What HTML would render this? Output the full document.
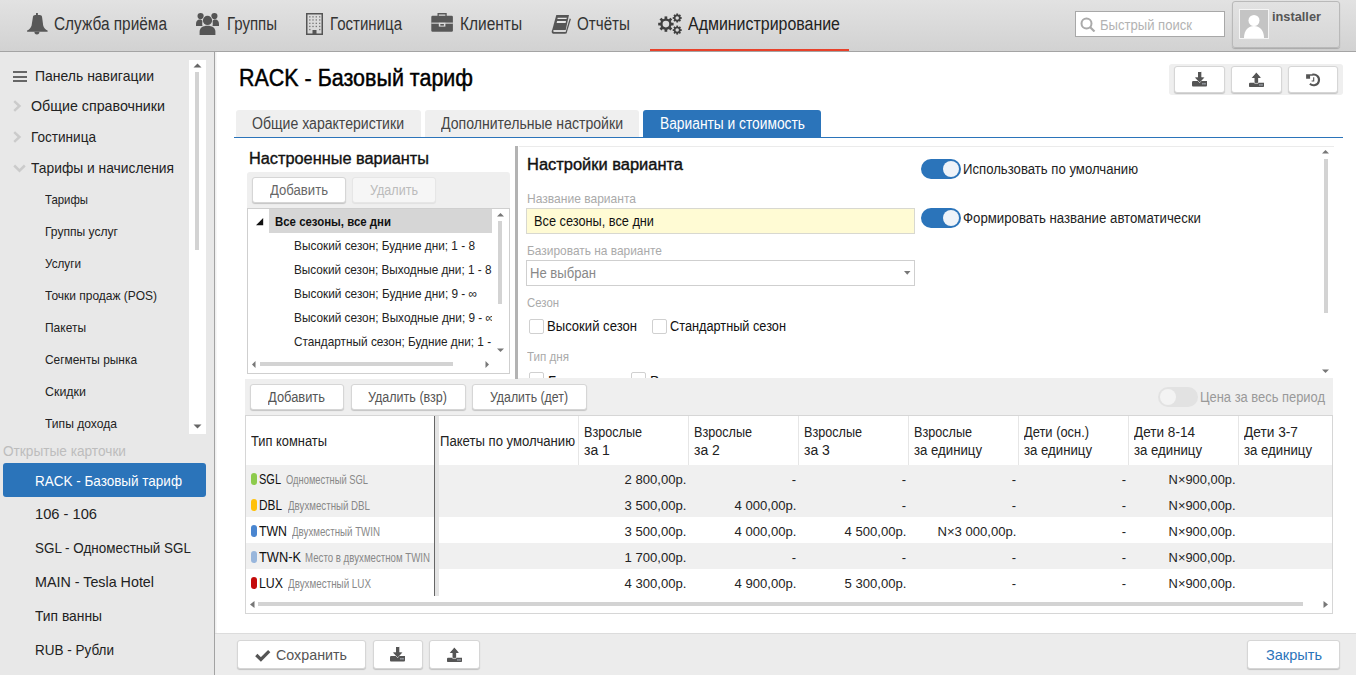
<!DOCTYPE html>
<html><head><meta charset="utf-8"><style>
html,body{margin:0;padding:0;width:1356px;height:675px;overflow:hidden;background:#fff;font-family:"Liberation Sans", sans-serif;}

.btn{position:absolute;box-sizing:border-box;background:#fff;border:1px solid #d6d6d6;border-radius:3px;box-shadow:0 1px 1px rgba(0,0,0,.18);}

</style></head><body>
<div style="position:absolute;left:0px;top:0px;width:1356px;height:51px;background:linear-gradient(#e2e2e2,#d2d2d2);"></div><div style="position:absolute;left:0px;top:51px;width:1356px;height:1px;background:#a4a4a4;"></div><div style="position:absolute;left:650px;top:49px;width:199px;height:2px;background:#e8412a;"></div><svg style="position:absolute;left:24px;top:10px" width="28" height="28" viewBox="0 0 28 28">
<path fill="#585858" d="M8.9 7.2C8.9 5.6 10 4.9 11.3 4.9H15.6C17 4.9 18.1 5.6 18.1 7.2L19.2 15.5C19.6 17.8 21.5 19.5 23.6 20.6V21.8H3.1V20.6C5.2 19.5 7.1 17.8 7.6 15.5Z"/>
<path fill="#585858" d="M12 3.1H13.9V5.2H12Z"/><path fill="#585858" d="M10.4 21.8H15.4A2.5 2.7 0 0 1 10.4 21.8Z"/></svg><div id="t4" style="position:absolute;left:54px;top:12.76px;font-size:18px;line-height:22px;color:#333;font-weight:400;white-space:nowrap;transform:scaleX(0.8556);transform-origin:left top;">Служба приёма</div><svg style="position:absolute;left:196px;top:13px" width="23" height="22" viewBox="0 0 23 22">
<g fill="#555"><circle cx="4.6" cy="3.1" r="3.1"/><circle cx="18.4" cy="3.1" r="3.1"/>
<path d="M0 11c0-3 1.5-4.6 3.6-4.6 1.4 0 2.6.6 3.4 1.8-.5.8-.8 1.8-.8 2.9 0 .7.1 1.3.3 1.9H0z"/>
<path d="M23 11c0-3-1.5-4.6-3.6-4.6-1.4 0-2.6.6-3.4 1.8.5.8.8 1.8.8 2.9 0 .7-.1 1.3-.3 1.9H23z"/>
</g><circle cx="11.5" cy="7.4" r="5.3" fill="#dbdbdb"/><circle cx="11.5" cy="7.4" r="4.6" fill="#555"/>
<path d="M2.8 22v-3.5c0-4.5 3.6-6.6 8.7-6.6s8.7 2.1 8.7 6.6V22z" fill="#d9d9d9"/>
<path d="M3.6 22v-3.3c0-4 3.3-6 7.9-6s7.9 2 7.9 6V22z" fill="#555"/></svg><div id="t6" style="position:absolute;left:227px;top:12.76px;font-size:18px;line-height:22px;color:#333;font-weight:400;white-space:nowrap;transform:scaleX(0.8336);transform-origin:left top;">Группы</div><svg style="position:absolute;left:306px;top:13px" width="17" height="22" viewBox="0 0 17 22">
<rect x="0.75" y="0.75" width="15.5" height="20.5" fill="none" stroke="#555" stroke-width="1.5"/>
<g fill="#7a7a7a"><rect x="3.1" y="3.2" width="1.4" height="1.3"/><rect x="6.3" y="3.2" width="1.4" height="1.3"/><rect x="9.6" y="3.2" width="1.4" height="1.3"/><rect x="13.0" y="3.2" width="1.4" height="1.3"/><rect x="3.1" y="6.3" width="1.4" height="1.3"/><rect x="6.3" y="6.3" width="1.4" height="1.3"/><rect x="9.6" y="6.3" width="1.4" height="1.3"/><rect x="13.0" y="6.3" width="1.4" height="1.3"/><rect x="3.1" y="9.7" width="1.4" height="1.3"/><rect x="6.3" y="9.7" width="1.4" height="1.3"/><rect x="9.6" y="9.7" width="1.4" height="1.3"/><rect x="13.0" y="9.7" width="1.4" height="1.3"/><rect x="3.1" y="12.8" width="1.4" height="1.3"/><rect x="6.3" y="12.8" width="1.4" height="1.3"/><rect x="9.6" y="12.8" width="1.4" height="1.3"/><rect x="13.0" y="12.8" width="1.4" height="1.3"/><rect x="3.1" y="15.9" width="1.4" height="1.3"/><rect x="13.0" y="15.9" width="1.4" height="1.3"/></g><rect x="6.5" y="17" width="4" height="4.5" fill="#555"/></svg><div id="t8" style="position:absolute;left:330px;top:12.76px;font-size:18px;line-height:22px;color:#333;font-weight:400;white-space:nowrap;transform:scaleX(0.8355);transform-origin:left top;">Гостиница</div><svg style="position:absolute;left:428px;top:10px" width="28" height="28" viewBox="0 0 28 28">
<path fill="#585858" d="M9.5 2.9H18.7V5.9H17.4V4.5H10.8V5.9H9.5Z"/>
<rect x="3.3" y="5.8" width="21.6" height="16" rx="1.2" fill="#585858"/>
<rect x="3.3" y="12.6" width="21.6" height="1.1" fill="#dcdcdc"/>
<rect x="10.8" y="12.8" width="6.6" height="3.8" fill="#dcdcdc"/><rect x="12.3" y="14" width="3.6" height="1.6" fill="#585858"/></svg><div id="t10" style="position:absolute;left:460px;top:12.76px;font-size:18px;line-height:22px;color:#333;font-weight:400;white-space:nowrap;transform:scaleX(0.8589);transform-origin:left top;">Клиенты</div><svg style="position:absolute;left:546px;top:10px" width="28" height="28" viewBox="0 0 28 28">
<path fill="#555" d="M10.3 4.9H23L19.7 20H6.2Z"/>
<path fill="#e6e6e6" d="M11.7 7.8H20.8L20.5 9H11.4Z"/><path fill="#e6e6e6" d="M11.1 11H20L19.6 12.9H10.6Z"/>
<path fill="#555" d="M6.2 19.9C5.2 21.2 5.6 23.8 8 23.8H19.6L20.1 21.9H8.2C7.2 21.9 6.9 20.7 7.6 19.9Z"/>
<path d="M24.3 8.8L19.9 23.4" stroke="#555" stroke-width="1.3" fill="none"/></svg><div id="t12" style="position:absolute;left:577px;top:12.76px;font-size:18px;line-height:22px;color:#333;font-weight:400;white-space:nowrap;transform:scaleX(0.8436);transform-origin:left top;">Отчёты</div><svg style="position:absolute;left:657px;top:13px" width="26" height="22" viewBox="0 0 26 22">
<circle cx="8.9" cy="11.1" r="4.5" fill="none" stroke="#404040" stroke-width="2.4"/><rect x="7.55" y="3.40" width="2.7" height="3.20" fill="#404040" transform="rotate(0.0 8.9 11.1)"/><rect x="7.55" y="3.40" width="2.7" height="3.20" fill="#404040" transform="rotate(45.0 8.9 11.1)"/><rect x="7.55" y="3.40" width="2.7" height="3.20" fill="#404040" transform="rotate(90.0 8.9 11.1)"/><rect x="7.55" y="3.40" width="2.7" height="3.20" fill="#404040" transform="rotate(135.0 8.9 11.1)"/><rect x="7.55" y="3.40" width="2.7" height="3.20" fill="#404040" transform="rotate(180.0 8.9 11.1)"/><rect x="7.55" y="3.40" width="2.7" height="3.20" fill="#404040" transform="rotate(225.0 8.9 11.1)"/><rect x="7.55" y="3.40" width="2.7" height="3.20" fill="#404040" transform="rotate(270.0 8.9 11.1)"/><rect x="7.55" y="3.40" width="2.7" height="3.20" fill="#404040" transform="rotate(315.0 8.9 11.1)"/><circle cx="20.2" cy="5" r="2.6" fill="none" stroke="#404040" stroke-width="1.7"/><rect x="19.30" y="0.50" width="1.8" height="1.90" fill="#404040" transform="rotate(0.0 20.2 5)"/><rect x="19.30" y="0.50" width="1.8" height="1.90" fill="#404040" transform="rotate(45.0 20.2 5)"/><rect x="19.30" y="0.50" width="1.8" height="1.90" fill="#404040" transform="rotate(90.0 20.2 5)"/><rect x="19.30" y="0.50" width="1.8" height="1.90" fill="#404040" transform="rotate(135.0 20.2 5)"/><rect x="19.30" y="0.50" width="1.8" height="1.90" fill="#404040" transform="rotate(180.0 20.2 5)"/><rect x="19.30" y="0.50" width="1.8" height="1.90" fill="#404040" transform="rotate(225.0 20.2 5)"/><rect x="19.30" y="0.50" width="1.8" height="1.90" fill="#404040" transform="rotate(270.0 20.2 5)"/><rect x="19.30" y="0.50" width="1.8" height="1.90" fill="#404040" transform="rotate(315.0 20.2 5)"/><circle cx="20.2" cy="17.1" r="2.6" fill="none" stroke="#404040" stroke-width="1.7"/><rect x="19.30" y="12.60" width="1.8" height="1.90" fill="#404040" transform="rotate(0.0 20.2 17.1)"/><rect x="19.30" y="12.60" width="1.8" height="1.90" fill="#404040" transform="rotate(45.0 20.2 17.1)"/><rect x="19.30" y="12.60" width="1.8" height="1.90" fill="#404040" transform="rotate(90.0 20.2 17.1)"/><rect x="19.30" y="12.60" width="1.8" height="1.90" fill="#404040" transform="rotate(135.0 20.2 17.1)"/><rect x="19.30" y="12.60" width="1.8" height="1.90" fill="#404040" transform="rotate(180.0 20.2 17.1)"/><rect x="19.30" y="12.60" width="1.8" height="1.90" fill="#404040" transform="rotate(225.0 20.2 17.1)"/><rect x="19.30" y="12.60" width="1.8" height="1.90" fill="#404040" transform="rotate(270.0 20.2 17.1)"/><rect x="19.30" y="12.60" width="1.8" height="1.90" fill="#404040" transform="rotate(315.0 20.2 17.1)"/></svg><div id="t14" style="position:absolute;left:688px;top:12.76px;font-size:18px;line-height:22px;color:#222;font-weight:400;white-space:nowrap;transform:scaleX(0.8855);transform-origin:left top;">Администрирование</div><div style="position:absolute;left:1075px;top:11px;width:150px;height:26px;box-sizing:border-box;background:#fff;border:1px solid #a8a8a8;"></div><svg style="position:absolute;left:1080px;top:17px" width="16" height="15" viewBox="0 0 16 15">
<circle cx="6.5" cy="6.5" r="5" fill="none" stroke="#aaa" stroke-width="2"/><path d="M10 10l4.5 4.5" stroke="#aaa" stroke-width="2.2"/></svg><div id="t17" style="position:absolute;left:1100px;top:16.65px;font-size:14px;line-height:17px;color:#b3b3b3;font-weight:400;white-space:nowrap;transform:scaleX(0.9336);transform-origin:left top;">Быстрый поиск</div><div style="position:absolute;left:1232px;top:1px;width:108px;height:47px;box-sizing:border-box;border:1px solid #b9b9b9;border-radius:3px;background:linear-gradient(#e2e2e2,#d6d6d6);box-shadow:0 1px 1px rgba(0,0,0,.2);"></div><div style="position:absolute;left:1239px;top:9px;width:30px;height:30px;box-sizing:border-box;border:1px solid #f4f4f4;background:#c4c4c4;overflow:hidden;"></div><svg style="position:absolute;left:1240px;top:10px" width="28" height="28" viewBox="0 0 28 28">
<circle cx="14" cy="10.5" r="5.5" fill="#fff"/><path d="M4 28c0-8 4.5-12 10-12s10 4 10 12z" fill="#fff"/></svg><div id="t21" style="position:absolute;left:1272px;top:8.50px;font-size:13px;line-height:16px;color:#555;font-weight:700;white-space:nowrap;transform:scaleX(0.9828);transform-origin:left top;">installer</div><div style="position:absolute;left:0px;top:52px;width:214px;height:623px;background:#e8e8e8;"></div><div style="position:absolute;left:214px;top:52px;width:1px;height:623px;background:#a2a2a2;"></div><div style="position:absolute;left:215px;top:52px;width:2px;height:623px;background:linear-gradient(90deg,#ececec,#fafafa);"></div><div style="position:absolute;left:189px;top:60px;width:17px;height:374px;background:#fff;"></div><svg style="position:absolute;left:193px;top:63px" width="9" height="5"><path d="M0.5 4.5L4.5 0.5 8.5 4.5z" fill="#666"/></svg><svg style="position:absolute;left:193px;top:424px" width="9" height="5"><path d="M0.5 0.5L4.5 4.5 8.5 0.5z" fill="#666"/></svg><div style="position:absolute;left:195px;top:72px;width:4px;height:178px;background:#d3d3d3;"></div><div style="position:absolute;left:13px;top:71px;width:14px;height:2px;background:#666;"></div><div style="position:absolute;left:13px;top:76px;width:14px;height:2px;background:#666;"></div><div style="position:absolute;left:13px;top:80px;width:14px;height:2px;background:#666;"></div><div id="t32" style="position:absolute;left:35px;top:66.80px;font-size:15px;line-height:18px;color:#222;font-weight:400;white-space:nowrap;transform:scaleX(0.9312);transform-origin:left top;">Панель навигации</div><svg style="position:absolute;left:13px;top:100px" width="9" height="12"><path d="M1.2 1.2l5.2 4.8-5.2 4.8" fill="none" stroke="#cbcbcb" stroke-width="2.5"/></svg><div id="t34" style="position:absolute;left:31px;top:96.80px;font-size:15px;line-height:18px;color:#222;font-weight:400;white-space:nowrap;transform:scaleX(0.9501);transform-origin:left top;">Общие справочники</div><svg style="position:absolute;left:13px;top:131px" width="9" height="12"><path d="M1.2 1.2l5.2 4.8-5.2 4.8" fill="none" stroke="#cbcbcb" stroke-width="2.5"/></svg><div id="t36" style="position:absolute;left:31px;top:127.80px;font-size:15px;line-height:18px;color:#222;font-weight:400;white-space:nowrap;transform:scaleX(0.9051);transform-origin:left top;">Гостиница</div><svg style="position:absolute;left:13px;top:164px" width="13" height="9"><path d="M1.2 1.5l5.3 5.2 5.3-5.2" fill="none" stroke="#cbcbcb" stroke-width="2.5"/></svg><div id="t38" style="position:absolute;left:31px;top:158.80px;font-size:15px;line-height:18px;color:#222;font-weight:400;white-space:nowrap;transform:scaleX(0.9210);transform-origin:left top;">Тарифы и начисления</div><div id="t39" style="position:absolute;left:45px;top:191.50px;font-size:13px;line-height:16px;color:#222;font-weight:400;white-space:nowrap;transform:scaleX(0.8753);transform-origin:left top;">Тарифы</div><div id="t40" style="position:absolute;left:45px;top:223.50px;font-size:13px;line-height:16px;color:#222;font-weight:400;white-space:nowrap;transform:scaleX(0.9286);transform-origin:left top;">Группы услуг</div><div id="t41" style="position:absolute;left:45px;top:255.50px;font-size:13px;line-height:16px;color:#222;font-weight:400;white-space:nowrap;transform:scaleX(0.9004);transform-origin:left top;">Услуги</div><div id="t42" style="position:absolute;left:45px;top:287.50px;font-size:13px;line-height:16px;color:#222;font-weight:400;white-space:nowrap;transform:scaleX(0.9206);transform-origin:left top;">Точки продаж (POS)</div><div id="t43" style="position:absolute;left:45px;top:319.50px;font-size:13px;line-height:16px;color:#222;font-weight:400;white-space:nowrap;transform:scaleX(0.9210);transform-origin:left top;">Пакеты</div><div id="t44" style="position:absolute;left:45px;top:351.50px;font-size:13px;line-height:16px;color:#222;font-weight:400;white-space:nowrap;transform:scaleX(0.9147);transform-origin:left top;">Сегменты рынка</div><div id="t45" style="position:absolute;left:45px;top:383.50px;font-size:13px;line-height:16px;color:#222;font-weight:400;white-space:nowrap;transform:scaleX(0.9563);transform-origin:left top;">Скидки</div><div id="t46" style="position:absolute;left:45px;top:415.50px;font-size:13px;line-height:16px;color:#222;font-weight:400;white-space:nowrap;transform:scaleX(0.9300);transform-origin:left top;">Типы дохода</div><div id="t47" style="position:absolute;left:3px;top:442.65px;font-size:14px;line-height:17px;color:#bdbdbd;font-weight:400;white-space:nowrap;transform:scaleX(0.9753);transform-origin:left top;">Открытые карточки</div><div style="position:absolute;left:3px;top:463px;width:203px;height:34px;background:#2b74ba;border-radius:3px;"></div><div id="t49" style="position:absolute;left:35px;top:471.80px;font-size:15px;line-height:18px;color:#fff;font-weight:400;white-space:nowrap;transform:scaleX(0.8992);transform-origin:left top;">RACK - Базовый тариф</div><div id="t50" style="position:absolute;left:35px;top:504.80px;font-size:15px;line-height:18px;color:#222;font-weight:400;white-space:nowrap;transform:scaleX(0.9781);transform-origin:left top;">106 - 106</div><div id="t51" style="position:absolute;left:35px;top:538.80px;font-size:15px;line-height:18px;color:#222;font-weight:400;white-space:nowrap;transform:scaleX(0.8957);transform-origin:left top;">SGL - Одноместный SGL</div><div id="t52" style="position:absolute;left:35px;top:572.80px;font-size:15px;line-height:18px;color:#222;font-weight:400;white-space:nowrap;transform:scaleX(0.9538);transform-origin:left top;">MAIN - Tesla Hotel</div><div id="t53" style="position:absolute;left:35px;top:606.80px;font-size:15px;line-height:18px;color:#222;font-weight:400;white-space:nowrap;transform:scaleX(0.9220);transform-origin:left top;">Тип ванны</div><div id="t54" style="position:absolute;left:35px;top:640.80px;font-size:15px;line-height:18px;color:#222;font-weight:400;white-space:nowrap;transform:scaleX(0.9004);transform-origin:left top;">RUB - Рубли</div><div id="t55" style="position:absolute;left:239px;top:64.03px;font-size:23px;line-height:28px;color:#000;font-weight:400;white-space:nowrap;transform:scaleX(0.9335);transform-origin:left top;-webkit-text-stroke:0.45px #000;">RACK - Базовый тариф</div><div style="position:absolute;left:1169px;top:64px;width:174px;height:31px;background:#efefef;border-radius:3px;"></div><div class="btn" style="left:1174px;top:66px;width:51px;height:27px;"></div><svg style="position:absolute;left:1192px;top:72px;overflow:visible" width="15" height="15" viewBox="0 0 15 15"><path fill="#555" d="M0 10.2Q0 9 1.2 9H15V13.4Q15 14.4 14 14.4H1Q0 14.4 0 13.4z"/><path d="M6 -0.5h3.3v5.6h3.1L7.65 10.6 2.9 5.1H6z" fill="#555" stroke="#fff" stroke-width="1"/><path d="M6 0h3.3v5.6h3.1L7.65 10.6 2.9 5.6H6z" fill="#555"/><rect x="10.3" y="11.3" width="1.3" height="1.1" fill="#cfd8e6"/><rect x="12.3" y="11.3" width="1.3" height="1.1" fill="#cfd8e6"/></svg><div class="btn" style="left:1231px;top:66px;width:51px;height:27px;"></div><svg style="position:absolute;left:1249px;top:72px;overflow:visible" width="15" height="15" viewBox="0 0 15 15"><path fill="#555" d="M0 11.3Q0 10.8 1 10.8H15V14.2Q15 14.9 14.3 14.9H.7Q0 14.9 0 14.2z"/><path d="M7.35 0.3L12.2 5.9H9.1V11.2H5.6V5.9H2.5z" fill="#555" stroke="#fff" stroke-width="0.8"/><path d="M7.35 0.8L11.8 5.9H9.1V10.8H5.6V5.9H2.9z" fill="#555"/><rect x="10.3" y="12.4" width="1.3" height="1.1" fill="#cfd8e6"/><rect x="12.3" y="12.4" width="1.3" height="1.1" fill="#cfd8e6"/></svg><div class="btn" style="left:1288px;top:66px;width:50px;height:27px;"></div><svg style="position:absolute;left:1304px;top:72px" width="18" height="16" viewBox="0 0 18 16">
<path d="M8.2 2.65A5.4 5.4 0 1 1 5.9 11.8" fill="none" stroke="#555" stroke-width="2.1"/>
<path d="M2.1 2.2H8.6V3.7H6.1V6.7H2.1z" fill="#555"/>
<path d="M9.7 5.2V9H7.6" fill="none" stroke="#555" stroke-width="1.1"/></svg><div style="position:absolute;left:236px;top:110px;width:185px;height:27px;background:#efefef;border-radius:3px 3px 0 0;"></div><div id="t64" style="position:absolute;left:252px;top:113.96px;font-size:16px;line-height:19px;color:#444;font-weight:400;white-space:nowrap;transform:scaleX(0.8794);transform-origin:left top;">Общие характеристики</div><div style="position:absolute;left:425px;top:110px;width:214px;height:27px;background:#efefef;border-radius:3px 3px 0 0;"></div><div id="t66" style="position:absolute;left:441px;top:113.96px;font-size:16px;line-height:19px;color:#444;font-weight:400;white-space:nowrap;transform:scaleX(0.8799);transform-origin:left top;">Дополнительные настройки</div><div style="position:absolute;left:643px;top:110px;width:178px;height:27px;background:#2b74ba;border-radius:3px 3px 0 0;"></div><div id="t68" style="position:absolute;left:660px;top:113.96px;font-size:16px;line-height:19px;color:#fff;font-weight:400;white-space:nowrap;transform:scaleX(0.8613);transform-origin:left top;">Варианты и стоимость</div><div style="position:absolute;left:234px;top:137px;width:1109px;height:1px;background:#2b74ba;"></div><div style="position:absolute;left:519px;top:146px;width:815px;height:1px;background:#ebebeb;"></div><div id="t71" style="position:absolute;left:249px;top:148.96px;font-size:16px;line-height:19px;color:#111;font-weight:400;white-space:nowrap;transform:scaleX(1.0192);transform-origin:left top;-webkit-text-stroke:0.35px #111;">Настроенные варианты</div><div style="position:absolute;left:247px;top:172px;width:263px;height:36px;background:#efefef;border-radius:3px 3px 0 0;"></div><div class="btn" style="left:252px;top:177px;width:94px;height:26px;"></div><div id="t74" style="position:absolute;left:270px;top:181.65px;font-size:14px;line-height:17px;color:#666;font-weight:400;white-space:nowrap;transform:scaleX(0.9374);transform-origin:left top;">Добавить</div><div class="btn" style="left:352px;top:177px;width:84px;height:26px;background:#f6f6f6;border-color:#e6e6e6;box-shadow:0 1px 1px rgba(0,0,0,.06);"></div><div id="t76" style="position:absolute;left:370px;top:181.65px;font-size:14px;line-height:17px;color:#bbb;font-weight:400;white-space:nowrap;transform:scaleX(0.8980);transform-origin:left top;">Удалить</div><div style="position:absolute;left:247px;top:208px;width:263px;height:166px;box-sizing:border-box;border:1px solid #cfcfcf;background:#fff;"></div><div style="position:absolute;left:269px;top:209px;width:223px;height:24px;background:#d6d6d6;"></div><svg style="position:absolute;left:256px;top:218px" width="8" height="8"><path d="M7.2 0V7.2H0z" fill="#111"/></svg><div id="t80" style="position:absolute;left:275px;top:214.84px;font-size:12px;line-height:14px;color:#111;font-weight:700;white-space:nowrap;transform:scaleX(0.9519);transform-origin:left top;">Все сезоны, все дни</div><div style="position:absolute;left:248px;top:234px;width:244px;height:124px;overflow:hidden;"><div id="t82" style="position:absolute;left:46px;top:3.50px;font-size:13px;line-height:16px;color:#222;font-weight:400;white-space:nowrap;transform:scaleX(0.9093);transform-origin:left top;">Высокий сезон; Будние дни; 1 - 8</div><div id="t83" style="position:absolute;left:46px;top:27.50px;font-size:13px;line-height:16px;color:#222;font-weight:400;white-space:nowrap;transform:scaleX(0.9054);transform-origin:left top;">Высокий сезон; Выходные дни; 1 - 8</div><div id="t84" style="position:absolute;left:46px;top:51.50px;font-size:13px;line-height:16px;color:#222;font-weight:400;white-space:nowrap;transform:scaleX(0.9100);transform-origin:left top;">Высокий сезон; Будние дни; 9 - ∞</div><div id="t85" style="position:absolute;left:46px;top:75.50px;font-size:13px;line-height:16px;color:#222;font-weight:400;white-space:nowrap;transform:scaleX(0.9084);transform-origin:left top;">Высокий сезон; Выходные дни; 9 - ∞</div><div id="t86" style="position:absolute;left:46px;top:99.50px;font-size:13px;line-height:16px;color:#222;font-weight:400;white-space:nowrap;transform:scaleX(0.9076);transform-origin:left top;">Стандартный сезон; Будние дни; 1 - 8</div></div><svg style="position:absolute;left:497px;top:213px" width="7" height="4"><path d="M0 3.5L3.5 0 7 3.5z" fill="#777"/></svg><div style="position:absolute;left:498px;top:221px;width:4px;height:83px;background:#d3d3d3;"></div><svg style="position:absolute;left:497px;top:348px" width="7" height="4"><path d="M0 0.5L3.5 4 7 0.5z" fill="#777"/></svg><svg style="position:absolute;left:252px;top:361px" width="4" height="7"><path d="M3.5 0L0 3.5 3.5 7z" fill="#777"/></svg><div style="position:absolute;left:260px;top:362px;width:193px;height:4px;background:#d3d3d3;"></div><svg style="position:absolute;left:485px;top:361px" width="4" height="7"><path d="M0.5 0L4 3.5 0.5 7z" fill="#777"/></svg><div style="position:absolute;left:515px;top:146px;width:3px;height:233px;background:#b3b3b3;"></div><div id="t95" style="position:absolute;left:527px;top:154.96px;font-size:16px;line-height:19px;color:#111;font-weight:400;white-space:nowrap;transform:scaleX(1.0281);transform-origin:left top;-webkit-text-stroke:0.4px #111;">Настройки варианта</div><div id="t96" style="position:absolute;left:527px;top:190.50px;font-size:13px;line-height:16px;color:#aaa;font-weight:400;white-space:nowrap;transform:scaleX(0.9266);transform-origin:left top;">Название варианта</div><div style="position:absolute;left:526px;top:208px;width:389px;height:26px;box-sizing:border-box;background:#fffbd4;border:1px solid #d8d8d0;"></div><div id="t98" style="position:absolute;left:534px;top:212.65px;font-size:14px;line-height:17px;color:#111;font-weight:400;white-space:nowrap;transform:scaleX(0.9105);transform-origin:left top;">Все сезоны, все дни</div><div id="t99" style="position:absolute;left:527px;top:242.50px;font-size:13px;line-height:16px;color:#aaa;font-weight:400;white-space:nowrap;transform:scaleX(0.9165);transform-origin:left top;">Базировать на варианте</div><div style="position:absolute;left:526px;top:260px;width:389px;height:26px;box-sizing:border-box;background:#fff;border:1px solid #cfcfcf;"></div><div id="t101" style="position:absolute;left:530px;top:264.65px;font-size:14px;line-height:17px;color:#888;font-weight:400;white-space:nowrap;transform:scaleX(0.9347);transform-origin:left top;">Не выбран</div><svg style="position:absolute;left:904px;top:271px" width="7" height="4"><path d="M0 0L6.5 0 3.25 3.8z" fill="#777"/></svg><div id="t103" style="position:absolute;left:527px;top:294.50px;font-size:13px;line-height:16px;color:#aaa;font-weight:400;white-space:nowrap;transform:scaleX(0.8752);transform-origin:left top;">Сезон</div><div style="position:absolute;left:529px;top:319px;width:15px;height:15px;box-sizing:border-box;border:1px solid #d0d0d0;border-radius:2px;background:#fff;"></div><div id="t105" style="position:absolute;left:547px;top:317.65px;font-size:14px;line-height:17px;color:#111;font-weight:400;white-space:nowrap;transform:scaleX(0.9349);transform-origin:left top;">Высокий сезон</div><div style="position:absolute;left:652px;top:319px;width:15px;height:15px;box-sizing:border-box;border:1px solid #d0d0d0;border-radius:2px;background:#fff;"></div><div id="t107" style="position:absolute;left:670px;top:317.65px;font-size:14px;line-height:17px;color:#111;font-weight:400;white-space:nowrap;transform:scaleX(0.9098);transform-origin:left top;">Стандартный сезон</div><div id="t108" style="position:absolute;left:527px;top:348.50px;font-size:13px;line-height:16px;color:#aaa;font-weight:400;white-space:nowrap;transform:scaleX(0.8918);transform-origin:left top;">Тип дня</div><div style="position:absolute;left:921px;top:159px;width:40px;height:20px;background:#2b74ba;border-radius:10px;"></div><div style="position:absolute;left:943px;top:161px;width:16px;height:16px;background:#eef3f9;border-radius:50%;"></div><div id="t111" style="position:absolute;left:963px;top:160.65px;font-size:14px;line-height:17px;color:#222;font-weight:400;white-space:nowrap;transform:scaleX(0.9399);transform-origin:left top;">Использовать по умолчанию</div><div style="position:absolute;left:921px;top:208px;width:40px;height:20px;background:#2b74ba;border-radius:10px;"></div><div style="position:absolute;left:943px;top:210px;width:16px;height:16px;background:#eef3f9;border-radius:50%;"></div><div id="t114" style="position:absolute;left:963px;top:209.65px;font-size:14px;line-height:17px;color:#222;font-weight:400;white-space:nowrap;transform:scaleX(0.9445);transform-origin:left top;">Формировать название автоматически</div><svg style="position:absolute;left:1322px;top:150px" width="7" height="4"><path d="M0 3.5L3.5 0 7 3.5z" fill="#777"/></svg><div style="position:absolute;left:1324px;top:159px;width:4px;height:154px;background:#d3d3d3;"></div><svg style="position:absolute;left:1322px;top:369px" width="7" height="4"><path d="M0 0.5L3.5 4 7 0.5z" fill="#777"/></svg><div style="position:absolute;left:520px;top:360px;width:800px;height:18px;overflow:hidden;"><div style="position:absolute;left:9px;top:12px;width:15px;height:15px;box-sizing:border-box;border:1px solid #d0d0d0;border-radius:2px;"></div><div style="position:absolute;left:111px;top:12px;width:15px;height:15px;box-sizing:border-box;border:1px solid #d0d0d0;border-radius:2px;"></div><div style="position:absolute;left:28px;top:13px;font-size:14px;line-height:17px;color:#111;">Будние дни</div><div style="position:absolute;left:130px;top:13px;font-size:14px;line-height:17px;color:#111;">Выходные дни</div></div><div style="position:absolute;left:518px;top:378px;width:815px;height:1px;background:#efefef;"></div><div style="position:absolute;left:245px;top:379px;width:1088px;height:36px;background:#efefef;"></div><div class="btn" style="left:250px;top:384px;width:94px;height:26px;"></div><div id="t127" style="position:absolute;left:268px;top:388.65px;font-size:14px;line-height:17px;color:#555;font-weight:400;white-space:nowrap;transform:scaleX(0.9212);transform-origin:left top;">Добавить</div><div class="btn" style="left:351px;top:384px;width:115px;height:26px;"></div><div id="t129" style="position:absolute;left:368px;top:388.65px;font-size:14px;line-height:17px;color:#555;font-weight:400;white-space:nowrap;transform:scaleX(0.8961);transform-origin:left top;">Удалить (взр)</div><div class="btn" style="left:472px;top:384px;width:115px;height:26px;"></div><div id="t131" style="position:absolute;left:490px;top:388.65px;font-size:14px;line-height:17px;color:#555;font-weight:400;white-space:nowrap;transform:scaleX(0.8806);transform-origin:left top;">Удалить (дет)</div><div style="position:absolute;left:1158px;top:387px;width:40px;height:20px;background:#e2e2e2;border-radius:10px;"></div><div style="position:absolute;left:1160px;top:389px;width:16px;height:16px;background:#f3f3f3;border-radius:50%;"></div><div id="t134" style="position:absolute;left:1200px;top:388.65px;font-size:14px;line-height:17px;color:#999;font-weight:400;white-space:nowrap;transform:scaleX(0.9224);transform-origin:left top;">Цена за весь период</div><div style="position:absolute;left:245px;top:415px;width:1088px;height:199px;box-sizing:border-box;border:1px solid #d6d6d6;background:#fff;"></div><div style="position:absolute;left:578px;top:416px;width:1px;height:49px;background:#e6e6e6;"></div><div style="position:absolute;left:688px;top:416px;width:1px;height:49px;background:#e6e6e6;"></div><div style="position:absolute;left:798px;top:416px;width:1px;height:49px;background:#e6e6e6;"></div><div style="position:absolute;left:908px;top:416px;width:1px;height:49px;background:#e6e6e6;"></div><div style="position:absolute;left:1018px;top:416px;width:1px;height:49px;background:#e6e6e6;"></div><div style="position:absolute;left:1128px;top:416px;width:1px;height:49px;background:#e6e6e6;"></div><div style="position:absolute;left:1238px;top:416px;width:1px;height:49px;background:#e6e6e6;"></div><div id="t143" style="position:absolute;left:251px;top:432.65px;font-size:14px;line-height:17px;color:#222;font-weight:400;white-space:nowrap;transform:scaleX(0.9200);transform-origin:left top;">Тип комнаты</div><div id="t144" style="position:absolute;left:440px;top:432.65px;font-size:14px;line-height:17px;color:#222;font-weight:400;white-space:nowrap;transform:scaleX(0.9374);transform-origin:left top;">Пакеты по умолчанию</div><div id="t145" style="position:absolute;left:584px;top:423.65px;font-size:14px;line-height:17px;color:#222;font-weight:400;white-space:nowrap;transform:scaleX(0.9012);transform-origin:left top;">Взрослые</div><div id="t146" style="position:absolute;left:584px;top:441.65px;font-size:14px;line-height:17px;color:#222;font-weight:400;white-space:nowrap;">за 1</div><div id="t147" style="position:absolute;left:694px;top:423.65px;font-size:14px;line-height:17px;color:#222;font-weight:400;white-space:nowrap;transform:scaleX(0.9012);transform-origin:left top;">Взрослые</div><div id="t148" style="position:absolute;left:694px;top:441.65px;font-size:14px;line-height:17px;color:#222;font-weight:400;white-space:nowrap;">за 2</div><div id="t149" style="position:absolute;left:804px;top:423.65px;font-size:14px;line-height:17px;color:#222;font-weight:400;white-space:nowrap;transform:scaleX(0.9012);transform-origin:left top;">Взрослые</div><div id="t150" style="position:absolute;left:804px;top:441.65px;font-size:14px;line-height:17px;color:#222;font-weight:400;white-space:nowrap;">за 3</div><div id="t151" style="position:absolute;left:914px;top:423.65px;font-size:14px;line-height:17px;color:#222;font-weight:400;white-space:nowrap;transform:scaleX(0.9012);transform-origin:left top;">Взрослые</div><div id="t152" style="position:absolute;left:914px;top:441.65px;font-size:14px;line-height:17px;color:#222;font-weight:400;white-space:nowrap;transform:scaleX(0.9426);transform-origin:left top;">за единицу</div><div id="t153" style="position:absolute;left:1024px;top:423.65px;font-size:14px;line-height:17px;color:#222;font-weight:400;white-space:nowrap;transform:scaleX(0.9199);transform-origin:left top;">Дети (осн.)</div><div id="t154" style="position:absolute;left:1024px;top:441.65px;font-size:14px;line-height:17px;color:#222;font-weight:400;white-space:nowrap;transform:scaleX(0.9426);transform-origin:left top;">за единицу</div><div id="t155" style="position:absolute;left:1134px;top:423.65px;font-size:14px;line-height:17px;color:#222;font-weight:400;white-space:nowrap;transform:scaleX(0.9690);transform-origin:left top;">Дети 8-14</div><div id="t156" style="position:absolute;left:1134px;top:441.65px;font-size:14px;line-height:17px;color:#222;font-weight:400;white-space:nowrap;transform:scaleX(0.9426);transform-origin:left top;">за единицу</div><div id="t157" style="position:absolute;left:1244px;top:423.65px;font-size:14px;line-height:17px;color:#222;font-weight:400;white-space:nowrap;transform:scaleX(0.9788);transform-origin:left top;">Дети 3-7</div><div id="t158" style="position:absolute;left:1244px;top:441.65px;font-size:14px;line-height:17px;color:#222;font-weight:400;white-space:nowrap;transform:scaleX(0.9426);transform-origin:left top;">за единицу</div><div style="position:absolute;left:246px;top:465px;width:1086px;height:26px;background:#f0f0f0;"></div><div style="position:absolute;left:251px;top:473px;width:6px;height:12px;background:#8dcb4c;border-radius:3px;"></div><div id="t161" style="position:absolute;left:259px;top:470.65px;font-size:14px;line-height:17px;color:#111;font-weight:400;white-space:nowrap;transform:scaleX(0.7853);transform-origin:left top;">SGL</div><div id="t162" style="position:absolute;right:670px;top:471.50px;font-size:13px;line-height:16px;color:#222;font-weight:400;white-space:nowrap;transform:scaleX(1.0089);transform-origin:right top;">2 800,00р.</div><div id="t163" style="position:absolute;right:560px;top:471.50px;font-size:13px;line-height:16px;color:#222;font-weight:400;white-space:nowrap;">-</div><div id="t164" style="position:absolute;right:450px;top:471.50px;font-size:13px;line-height:16px;color:#222;font-weight:400;white-space:nowrap;">-</div><div id="t165" style="position:absolute;right:340px;top:471.50px;font-size:13px;line-height:16px;color:#222;font-weight:400;white-space:nowrap;">-</div><div id="t166" style="position:absolute;right:230px;top:471.50px;font-size:13px;line-height:16px;color:#222;font-weight:400;white-space:nowrap;">-</div><div id="t167" style="position:absolute;right:120px;top:471.50px;font-size:13px;line-height:16px;color:#222;font-weight:400;white-space:nowrap;transform:scaleX(0.9912);transform-origin:right top;">N×900,00р.</div><div style="position:absolute;left:246px;top:491px;width:1086px;height:26px;background:#f0f0f0;"></div><div style="position:absolute;left:251px;top:499px;width:6px;height:12px;background:#ffc107;border-radius:3px;"></div><div id="t170" style="position:absolute;left:259px;top:496.65px;font-size:14px;line-height:17px;color:#111;font-weight:400;white-space:nowrap;transform:scaleX(0.8445);transform-origin:left top;">DBL</div><div id="t171" style="position:absolute;right:670px;top:497.50px;font-size:13px;line-height:16px;color:#222;font-weight:400;white-space:nowrap;transform:scaleX(1.0089);transform-origin:right top;">3 500,00р.</div><div id="t172" style="position:absolute;right:560px;top:497.50px;font-size:13px;line-height:16px;color:#222;font-weight:400;white-space:nowrap;transform:scaleX(1.0089);transform-origin:right top;">4 000,00р.</div><div id="t173" style="position:absolute;right:450px;top:497.50px;font-size:13px;line-height:16px;color:#222;font-weight:400;white-space:nowrap;">-</div><div id="t174" style="position:absolute;right:340px;top:497.50px;font-size:13px;line-height:16px;color:#222;font-weight:400;white-space:nowrap;">-</div><div id="t175" style="position:absolute;right:230px;top:497.50px;font-size:13px;line-height:16px;color:#222;font-weight:400;white-space:nowrap;">-</div><div id="t176" style="position:absolute;right:120px;top:497.50px;font-size:13px;line-height:16px;color:#222;font-weight:400;white-space:nowrap;transform:scaleX(0.9912);transform-origin:right top;">N×900,00р.</div><div style="position:absolute;left:246px;top:517px;width:1086px;height:26px;background:#fff;"></div><div style="position:absolute;left:251px;top:525px;width:6px;height:12px;background:#4a86d0;border-radius:3px;"></div><div id="t179" style="position:absolute;left:259px;top:522.65px;font-size:14px;line-height:17px;color:#111;font-weight:400;white-space:nowrap;transform:scaleX(0.8780);transform-origin:left top;">TWN</div><div id="t180" style="position:absolute;right:670px;top:523.50px;font-size:13px;line-height:16px;color:#222;font-weight:400;white-space:nowrap;transform:scaleX(1.0089);transform-origin:right top;">3 500,00р.</div><div id="t181" style="position:absolute;right:560px;top:523.50px;font-size:13px;line-height:16px;color:#222;font-weight:400;white-space:nowrap;transform:scaleX(1.0089);transform-origin:right top;">4 000,00р.</div><div id="t182" style="position:absolute;right:450px;top:523.50px;font-size:13px;line-height:16px;color:#222;font-weight:400;white-space:nowrap;transform:scaleX(1.0089);transform-origin:right top;">4 500,00р.</div><div id="t183" style="position:absolute;right:340px;top:523.50px;font-size:13px;line-height:16px;color:#222;font-weight:400;white-space:nowrap;transform:scaleX(1.0072);transform-origin:right top;">N×3 000,00р.</div><div id="t184" style="position:absolute;right:230px;top:523.50px;font-size:13px;line-height:16px;color:#222;font-weight:400;white-space:nowrap;">-</div><div id="t185" style="position:absolute;right:120px;top:523.50px;font-size:13px;line-height:16px;color:#222;font-weight:400;white-space:nowrap;transform:scaleX(0.9912);transform-origin:right top;">N×900,00р.</div><div style="position:absolute;left:246px;top:543px;width:1086px;height:26px;background:#f0f0f0;"></div><div style="position:absolute;left:251px;top:551px;width:6px;height:12px;background:#98b6dc;border-radius:3px;"></div><div id="t188" style="position:absolute;left:259px;top:548.65px;font-size:14px;line-height:17px;color:#111;font-weight:400;white-space:nowrap;transform:scaleX(0.9152);transform-origin:left top;">TWN-K</div><div id="t189" style="position:absolute;right:670px;top:549.50px;font-size:13px;line-height:16px;color:#222;font-weight:400;white-space:nowrap;transform:scaleX(1.0089);transform-origin:right top;">1 700,00р.</div><div id="t190" style="position:absolute;right:560px;top:549.50px;font-size:13px;line-height:16px;color:#222;font-weight:400;white-space:nowrap;">-</div><div id="t191" style="position:absolute;right:450px;top:549.50px;font-size:13px;line-height:16px;color:#222;font-weight:400;white-space:nowrap;">-</div><div id="t192" style="position:absolute;right:340px;top:549.50px;font-size:13px;line-height:16px;color:#222;font-weight:400;white-space:nowrap;">-</div><div id="t193" style="position:absolute;right:230px;top:549.50px;font-size:13px;line-height:16px;color:#222;font-weight:400;white-space:nowrap;">-</div><div id="t194" style="position:absolute;right:120px;top:549.50px;font-size:13px;line-height:16px;color:#222;font-weight:400;white-space:nowrap;transform:scaleX(0.9912);transform-origin:right top;">N×900,00р.</div><div style="position:absolute;left:246px;top:569px;width:1086px;height:26px;background:#fff;"></div><div style="position:absolute;left:251px;top:577px;width:6px;height:12px;background:#c30a0a;border-radius:3px;"></div><div id="t197" style="position:absolute;left:259px;top:574.65px;font-size:14px;line-height:17px;color:#111;font-weight:400;white-space:nowrap;transform:scaleX(0.8812);transform-origin:left top;">LUX</div><div id="t198" style="position:absolute;right:670px;top:575.50px;font-size:13px;line-height:16px;color:#222;font-weight:400;white-space:nowrap;transform:scaleX(1.0089);transform-origin:right top;">4 300,00р.</div><div id="t199" style="position:absolute;right:560px;top:575.50px;font-size:13px;line-height:16px;color:#222;font-weight:400;white-space:nowrap;transform:scaleX(1.0089);transform-origin:right top;">4 900,00р.</div><div id="t200" style="position:absolute;right:450px;top:575.50px;font-size:13px;line-height:16px;color:#222;font-weight:400;white-space:nowrap;transform:scaleX(1.0089);transform-origin:right top;">5 300,00р.</div><div id="t201" style="position:absolute;right:340px;top:575.50px;font-size:13px;line-height:16px;color:#222;font-weight:400;white-space:nowrap;">-</div><div id="t202" style="position:absolute;right:230px;top:575.50px;font-size:13px;line-height:16px;color:#222;font-weight:400;white-space:nowrap;">-</div><div id="t203" style="position:absolute;right:120px;top:575.50px;font-size:13px;line-height:16px;color:#222;font-weight:400;white-space:nowrap;transform:scaleX(0.9912);transform-origin:right top;">N×900,00р.</div><div id="t204" style="position:absolute;left:286px;top:472.84px;font-size:12px;line-height:14px;color:#888;font-weight:400;white-space:nowrap;transform:scaleX(0.7803);transform-origin:left top;">Одноместный SGL</div><div id="t205" style="position:absolute;left:288px;top:498.84px;font-size:12px;line-height:14px;color:#888;font-weight:400;white-space:nowrap;transform:scaleX(0.8095);transform-origin:left top;">Двухместный DBL</div><div id="t206" style="position:absolute;left:292px;top:524.84px;font-size:12px;line-height:14px;color:#888;font-weight:400;white-space:nowrap;transform:scaleX(0.8102);transform-origin:left top;">Двухместный TWIN</div><div id="t207" style="position:absolute;left:305px;top:550.84px;font-size:12px;line-height:14px;color:#888;font-weight:400;white-space:nowrap;transform:scaleX(0.8066);transform-origin:left top;">Место в двухместном TWIN</div><div id="t208" style="position:absolute;left:288px;top:576.84px;font-size:12px;line-height:14px;color:#888;font-weight:400;white-space:nowrap;transform:scaleX(0.8194);transform-origin:left top;">Двухместный LUX</div><div style="position:absolute;left:434px;top:416px;width:1px;height:180px;background:#666;"></div><div style="position:absolute;left:435px;top:416px;width:4px;height:180px;background:#e4e4e4;"></div><svg style="position:absolute;left:250px;top:601px" width="5" height="7"><path d="M4.5 0L0 3.5 4.5 7z" fill="#777"/></svg><div style="position:absolute;left:258px;top:602px;width:1045px;height:4px;background:#d3d3d3;"></div><svg style="position:absolute;left:1323px;top:601px" width="5" height="7"><path d="M0.5 0L5 3.5 0.5 7z" fill="#777"/></svg><div style="position:absolute;left:215px;top:633px;width:1141px;height:1px;background:#dcdcdc;"></div><div style="position:absolute;left:215px;top:634px;width:1141px;height:41px;background:#ececec;"></div><div class="btn" style="left:237px;top:640px;width:129px;height:29px;"></div><svg style="position:absolute;left:255px;top:650px" width="16" height="12" viewBox="0 0 16 12"><path d="M1.3 5l4.6 4.4 8.3-8.2" fill="none" stroke="#555" stroke-width="3.2"/></svg><div id="t218" style="position:absolute;left:276px;top:645.80px;font-size:15px;line-height:18px;color:#555;font-weight:400;white-space:nowrap;transform:scaleX(0.9524);transform-origin:left top;">Сохранить</div><div class="btn" style="left:373px;top:640px;width:50px;height:29px;"></div><svg style="position:absolute;left:390px;top:647px;overflow:visible" width="15" height="15" viewBox="0 0 15 15"><path fill="#555" d="M0 10.2Q0 9 1.2 9H15V13.4Q15 14.4 14 14.4H1Q0 14.4 0 13.4z"/><path d="M6 -0.5h3.3v5.6h3.1L7.65 10.6 2.9 5.1H6z" fill="#555" stroke="#fff" stroke-width="1"/><path d="M6 0h3.3v5.6h3.1L7.65 10.6 2.9 5.6H6z" fill="#555"/><rect x="10.3" y="11.3" width="1.3" height="1.1" fill="#cfd8e6"/><rect x="12.3" y="11.3" width="1.3" height="1.1" fill="#cfd8e6"/></svg><div class="btn" style="left:429px;top:640px;width:51px;height:29px;"></div><svg style="position:absolute;left:447px;top:647px;overflow:visible" width="15" height="15" viewBox="0 0 15 15"><path fill="#555" d="M0 11.3Q0 10.8 1 10.8H15V14.2Q15 14.9 14.3 14.9H.7Q0 14.9 0 14.2z"/><path d="M7.35 0.3L12.2 5.9H9.1V11.2H5.6V5.9H2.5z" fill="#555" stroke="#fff" stroke-width="0.8"/><path d="M7.35 0.8L11.8 5.9H9.1V10.8H5.6V5.9H2.9z" fill="#555"/><rect x="10.3" y="12.4" width="1.3" height="1.1" fill="#cfd8e6"/><rect x="12.3" y="12.4" width="1.3" height="1.1" fill="#cfd8e6"/></svg><div class="btn" style="left:1247px;top:640px;width:93px;height:29px;"></div><div id="t224" style="position:absolute;left:1266px;top:645.80px;font-size:15px;line-height:18px;color:#2b74ba;font-weight:400;white-space:nowrap;transform:scaleX(0.9692);transform-origin:left top;">Закрыть</div>
</body></html>
